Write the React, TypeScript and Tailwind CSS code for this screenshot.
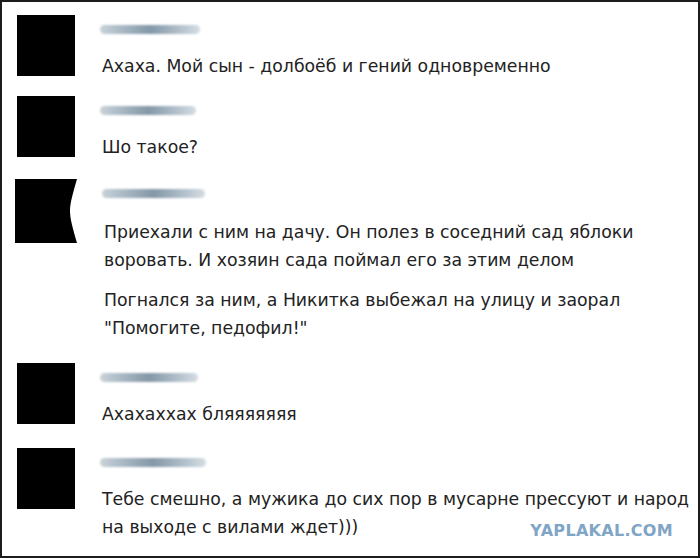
import * as React from "react";

type Comment = {
  nameWidth: number;
  paras: string[][];
  gapAfter: number;
  textTop?: number;
  notched?: boolean;
};

const comments: readonly Comment[] = [
  {
    nameWidth: 100,
    paras: [["Ахаха. Мой сын - долбоёб и гений одновременно"]],
    gapAfter: 16,
  },
  {
    nameWidth: 96,
    paras: [["Шо такое?"]],
    gapAfter: 18,
  },
  {
    nameWidth: 103,
    notched: true,
    textTop: 20,
    paras: [
      [
        "Приехали с ним на дачу. Он полез в соседний сад яблоки",
        "воровать. И хозяин сада поймал его за этим делом",
      ],
      [
        "Погнался за ним, а Никитка выбежал на улицу и заорал",
        "\"Помогите, педофил!\"",
      ],
    ],
    gapAfter: 21,
  },
  {
    nameWidth: 98,
    paras: [["Ахахаххах бляяяяяяя"]],
    gapAfter: 20,
  },
  {
    nameWidth: 106,
    paras: [
      [
        "Тебе смешно, а мужика до сих пор в мусарне прессуют и народ",
        "на выходе с вилами ждет)))",
      ],
    ],
    gapAfter: 0,
  },
];

function Avatar({ notched }: { notched?: boolean }) {
  if (notched) {
    // this one was cropped badly, right edge bends inward a bit
    return (
      <svg width="62" height="64" viewBox="0 0 62 64" className="-ml-[2px] shrink-0">
        <path d="M0 0 H62 C58 14 55 24 55 32 C55 40 58 50 62 64 H0 Z" fill="#000" />
      </svg>
    );
  }
  return <div className="h-[61px] w-[58px] shrink-0 bg-black" />;
}

function NameBar({ width }: { width: number }) {
  return (
    <div
      className="-ml-[2px] mt-[10px] h-[9px] rounded-full bg-gradient-to-r from-[#c9d2d9] via-[#8398a8] to-[#d5dde3] blur-[1.2px]"
      style={{ width }}
    />
  );
}

export default function App() {
  return (
    <div
      className="relative h-[558px] w-[700px] overflow-hidden border-2 border-[#1c1c1c] bg-white text-[17.3px] leading-[28px] text-[#222]"
      style={{ fontFamily: '"DejaVu Sans", Verdana, sans-serif' }}
    >
      <div className="flex flex-col pl-[15px] pt-[13px]">
        {comments.map((c, i) => (
          <div key={i} className="flex items-start gap-[27px]" style={{ marginBottom: c.gapAfter }}>
            <Avatar notched={c.notched} />
            <div className="flex flex-col">
              <NameBar width={c.nameWidth} />
              <div className="flex flex-col gap-[12px]" style={{ marginTop: c.textTop ?? 18 }}>
                {c.paras.map((p, j) => (
                  <p key={j}>
                    {p.map((line, k) => (
                      <span key={k} className="block whitespace-nowrap">
                        {line}
                      </span>
                    ))}
                  </p>
                ))}
              </div>
            </div>
          </div>
        ))}
      </div>

      {/* site watermark */}
      <div className="absolute right-[25px] top-[519px] text-[16px] font-bold leading-[20px] tracking-[0.3px] text-[#80a5c5]">
        YAPLAKAL.COM
      </div>
    </div>
  );
}
